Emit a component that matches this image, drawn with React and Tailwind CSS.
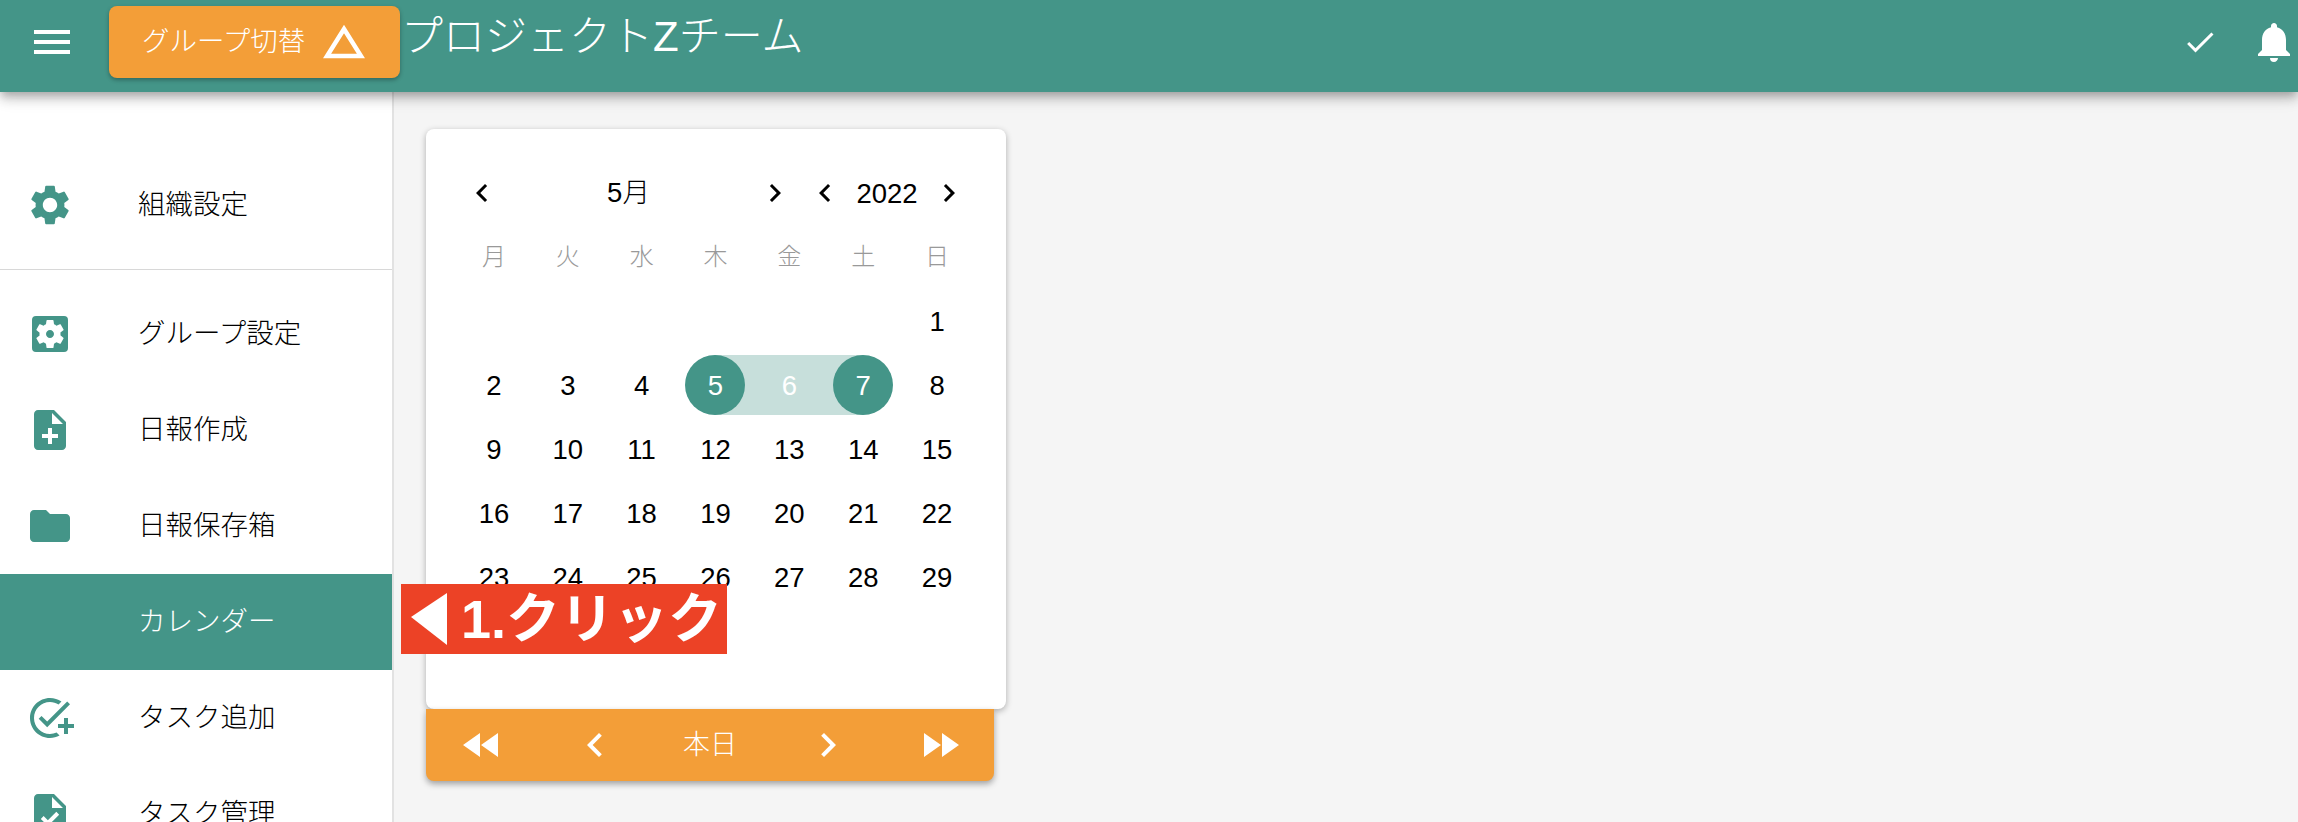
import {
  MdMenu, MdDone, MdNotifications, MdSettings, MdSettingsApplications, MdNoteAdd,
  MdFolder, MdAddTask, MdTask, MdChevronLeft, MdChevronRight, MdFastRewind, MdFastForward
} from "react-icons/md";

const menuTop = [{ label: "組織設定", Icon: MdSettings }];

const menuItems = [
  { label: "グループ設定", Icon: MdSettingsApplications },
  { label: "日報作成", Icon: MdNoteAdd },
  { label: "日報保存箱", Icon: MdFolder },
  { label: "カレンダー", active: true },
  { label: "タスク追加", Icon: MdAddTask },
  { label: "タスク管理", Icon: MdTask },
];

const weekDays = ["月", "火", "水", "木", "金", "土", "日"];

const days = [
  "", "", "", "", "", "", 1,
  2, 3, 4, 5, 6, 7, 8,
  9, 10, 11, 12, 13, 14, 15,
  16, 17, 18, 19, 20, 21, 22,
  23, 24, 25, 26, 27, 28, 29,
];

function MenuRow({ label, Icon, active }) {
  return (
    <div className={`flex h-24 items-center text-[27.5px] ${active ? "bg-[#449588] text-white" : "text-black"}`}>
      <div className="flex w-[138px] shrink-0 pl-[26px]">
        {Icon && <Icon size={48} className="text-[#449588]" />}
      </div>
      <span>{label}</span>
    </div>
  );
}

function DayCell({ day }) {
  if (day === 5 || day === 7) {
    return (
      <div className={`flex h-16 items-center justify-center ${day === 5 ? "bg-[linear-gradient(90deg,transparent_50%,#c7dfdb_50%)]" : "bg-[linear-gradient(90deg,#c7dfdb_50%,transparent_50%)]"} bg-[length:100%_60px] bg-center bg-no-repeat`}>
        <div className="flex h-[60px] w-[60px] items-center justify-center rounded-full bg-[#449588] pt-[2px] text-white">{day}</div>
      </div>
    );
  }
  if (day === 6) {
    return (
      <div className="flex h-16 items-center justify-center">
        <div className="flex h-[60px] w-full items-center justify-center bg-[#c7dfdb] pt-[2px] text-white">{day}</div>
      </div>
    );
  }
  return <div className="flex h-16 items-center justify-center pt-[2px] text-black">{day}</div>;
}

function Calendar() {
  return (
    <div className="h-[580px] w-[580px] rounded-lg bg-white pl-[31px] pr-[32px] pt-8 text-[27.5px] shadow-[0_2px_6px_rgba(0,0,0,0.3)]">
      <div className="flex h-16 items-center text-black">
        <div className="flex w-[343px] items-center">
          <div className="flex w-[50px] justify-center"><MdChevronLeft size={36} /></div>
          <span className="flex-1 text-center">5月</span>
          <div className="flex w-[50px] justify-center"><MdChevronRight size={36} /></div>
        </div>
        <div className="flex w-[174px] items-center">
          <div className="flex w-[50px] justify-center"><MdChevronLeft size={36} /></div>
          <span className="flex-1 pt-px text-center">2022</span>
          <div className="flex w-[50px] justify-center"><MdChevronRight size={36} /></div>
        </div>
      </div>
      <div className="grid grid-cols-7">
        {weekDays.map((w) => (
          <div key={w} className="flex h-16 items-center justify-center text-[24px] text-[#999999]">{w}</div>
        ))}
        {days.map((d, i) => (
          <DayCell key={i} day={d} />
        ))}
      </div>
    </div>
  );
}

export default function App() {
  return (
    <div className="flex h-screen w-full flex-col overflow-hidden bg-[#f5f5f5] font-['Liberation_Sans','Noto_Sans_CJK_JP',sans-serif] font-light">
      <header className="relative z-10 flex h-[92px] shrink-0 items-start bg-[#449588] text-white shadow-[0_4px_8px_-2px_rgba(0,0,0,0.2),0_8px_10px_rgba(0,0,0,0.14),0_2px_20px_rgba(0,0,0,0.12)]">
        <div className="flex h-[84px] w-[109px] shrink-0 items-center pl-7">
          <MdMenu size={48} />
        </div>
        <div className="mt-1.5 flex h-[72px] w-[291px] shrink-0 items-center rounded-lg bg-[#f39e38] pl-[33px] text-[27.5px] shadow-[0_2px_4px_rgba(0,0,0,0.3)]">
          <span>グループ切替</span>
          <svg width="42" height="34" viewBox="0 0 42 34" className="ml-[18px]">
            <path d="M21 4 L38 31 H4 Z" fill="none" stroke="white" strokeWidth="4.5" />
          </svg>
        </div>
        <h1 className="ml-[1px] mt-[7px] text-[42px] leading-[60px] font-light whitespace-nowrap">プロジェクトZチーム</h1>
        <div className="ml-auto flex h-[84px] items-center">
          <MdDone size={36} />
          <MdNotifications size={48} className="ml-[32px]" />
        </div>
      </header>

      <div className="flex min-h-0 flex-1">
        <aside className="w-[394px] shrink-0 border-r-2 border-[#e2e2e2] bg-white pt-[65px]">
          {menuTop.map((m) => (
            <MenuRow key={m.label} {...m} />
          ))}
          <div className="my-4 h-px bg-[#d8d8d8]" />
          {menuItems.map((m) => (
            <MenuRow key={m.label} {...m} />
          ))}
        </aside>

        <main className="relative flex-1 pl-8 pt-[37px]">
          <Calendar />
          <div className="flex h-[72px] w-[568px] items-center rounded-b-lg bg-[#f39e38] text-[27px] text-white shadow-[0_3px_6px_rgba(0,0,0,0.35)]">
            <div className="flex w-[111px] justify-center"><MdFastRewind size={48} /></div>
            <div className="flex w-[116px] justify-center"><MdChevronLeft size={48} /></div>
            <div className="flex w-[114px] justify-center">本日</div>
            <div className="flex w-[122px] justify-center"><MdChevronRight size={48} /></div>
            <div className="flex w-[102px] justify-center"><MdFastForward size={48} /></div>
          </div>

          {/* annotation over the calendar */}
          <div className="absolute left-[7px] top-[492px] flex h-[70px] w-[326px] items-center bg-[#ec4226] pl-[10px] text-[54px] font-bold whitespace-nowrap text-white">
            <svg width="36" height="52" viewBox="0 0 36 52" className="shrink-0">
              <path d="M36 0 V52 L0 24 Z" fill="white" />
            </svg>
            <span className="ml-[14px]">1.クリック</span>
          </div>
        </main>
      </div>
    </div>
  );
}
